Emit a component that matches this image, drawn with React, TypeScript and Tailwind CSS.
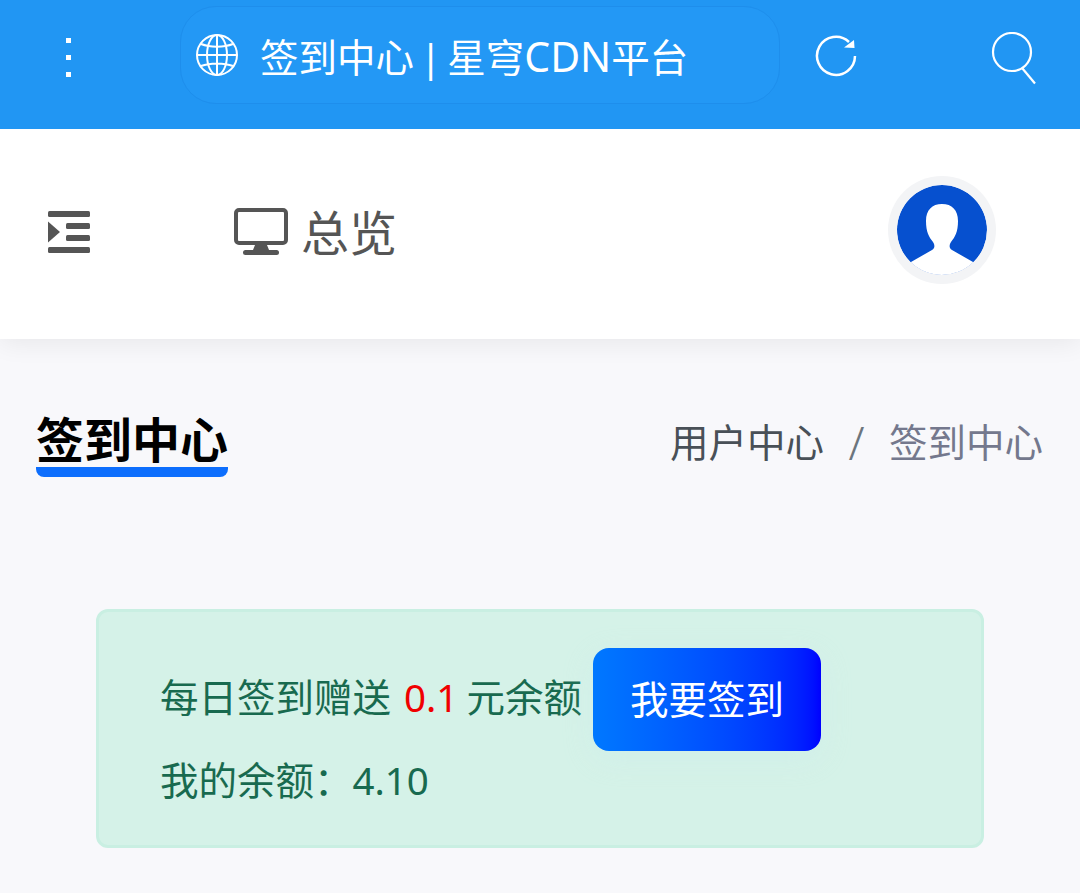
import React from "react";

const FONT = "font-['Noto_Sans','Noto_Sans_CJK_SC',sans-serif]";

const GlobeIcon = () => (
  <svg width="44" height="44" viewBox="0 0 44 44" fill="none" stroke="white" strokeWidth="2">
    <circle cx="22" cy="22" r="20" />
    <ellipse cx="22" cy="22" rx="10" ry="20" />
    <path d="M22 2v40M2 22h40M6 11c9 3.5 23 3.500 32 0M6 33c9-3.500 23-3.500 32 0" />
  </svg>
);

const ReloadIcon = () => (
  <svg width="42" height="42" viewBox="0 0 42 42" fill="none">
    <path d="M40 21a19 19 0 1 1-6-14" stroke="white" strokeWidth="2.500" />
    <path d="M29 12.500l10.500 0.500-0.500-8z" fill="white" />
  </svg>
);

const SearchIcon = () => (
  <svg width="46" height="54" viewBox="0 0 46 54" fill="none" stroke="white" strokeWidth="2.200">
    <circle cx="21" cy="20" r="19" />
    <path d="M31.500 36.500L44 51.500" />
  </svg>
);

const IndentIcon = () => (
  <svg width="42" height="42" viewBox="0 0 42 42" fill="#555555">
    <rect x="0" y="0" width="42" height="6" rx="1.500" />
    <rect x="18" y="12" width="24" height="6" rx="1.500" />
    <rect x="18" y="24" width="24" height="6" rx="1.500" />
    <rect x="0" y="36" width="42" height="6" rx="1.500" />
    <path d="M0 10.500L12 21 0 31.500z" />
  </svg>
);

const MonitorIcon = () => (
  <svg width="54" height="48" viewBox="0 0 54 48" fill="none">
    <rect x="2" y="2" width="50" height="33" rx="3" stroke="#555555" strokeWidth="4" />
    <path d="M21 37h12l2 5h-16z" fill="#555555" />
    <rect x="9" y="42" width="36" height="5" rx="2.500" fill="#555555" />
  </svg>
);

const Avatar = () => (
  <div className="w-[108px] h-[108px] rounded-full bg-[#f3f4f6] flex items-center justify-center">
    <svg width="90" height="90" viewBox="0 0 90 90" className="rounded-full">
      <circle cx="45" cy="45" r="45" fill="#0650cf" />
      <path
        d="M14 77L35 65C38 63 38 60 36 57C32 52 29 47 29 36C29 25 35 19 45 19C55 19 61 25 61 36C61 47 58 52 54 57C52 60 52 63 55 65L76 77V92H14z"
        fill="white"
      />
    </svg>
  </div>
);

export default function App() {
  return (
    <div className={`${FONT} w-full min-h-[893px] bg-[#f8f8fb] overflow-hidden`}>
      <div className="relative z-10 h-[129px] bg-[#2196f3] flex items-center">
        <div className="w-[180px] flex justify-center pr-[44px] pb-[15px]">
          <div className="flex flex-col gap-[12px]">
            <span className="block w-[5px] h-[5px] bg-white" />
            <span className="block w-[5px] h-[5px] bg-white" />
            <span className="block w-[5px] h-[5px] bg-white" />
          </div>
        </div>
        <div className="w-[600px] h-[98px] mb-[20px] rounded-[36px] border border-[#1e8eec] bg-[#2398f5] flex items-center pl-[14px] gap-[21px]">
          <GlobeIcon />
          <span className="text-[38.500px] leading-none text-white whitespace-nowrap pt-[4px] [word-spacing:-4px]">
            签到中心 | 星穹<span className="text-[41px]">CDN</span>平台
          </span>
        </div>
        <div className="ml-[35px] mb-[18px]">
          <ReloadIcon />
        </div>
        <div className="ml-auto mr-[43px] mb-[11px]">
          <SearchIcon />
        </div>
      </div>

      <div className="h-[210px] bg-white shadow-[0_4px_24px_rgba(0,0,0,0.07)] flex items-center pl-[48px] pr-[84px]">
        <div className="mb-[4px]">
          <IndentIcon />
        </div>
        <div className="ml-[144px] flex items-center gap-[13px]">
          <div className="mb-[4px]">
            <MonitorIcon />
          </div>
          <span className="text-[48px] leading-none text-[#555555] pb-[3px]">总览</span>
        </div>
        <div className="ml-auto pb-[8px]">
          <Avatar />
        </div>
      </div>

      <div className="flex items-start justify-between pl-[36px] pr-[37px] pt-[72px]">
        <div className="w-[192px] relative h-[66px]">
          <span className="block text-[48px] leading-[57px] font-bold text-black whitespace-nowrap">
            签到中心
          </span>
          <div className="absolute left-0 right-0 bottom-0 h-[10px] rounded-b-[8px] bg-[#0d6efd]" />
        </div>
        <div className="flex items-center text-[38.500px] leading-[54px] pt-[4px] whitespace-nowrap">
          <span className="text-[#495057]">用户中心</span>
          <span className="text-[46px] text-[#6c757d] mx-[24.500px] font-light">/</span>
          <span className="text-[#74788d]">签到中心</span>
        </div>
      </div>

      <div className="mx-[96px] mt-[132px] h-[239px] rounded-[12px] border-[3px] border-[#c9efe2] bg-[#d5f2e8] pl-[61px] pt-[36px] text-[#186a4f]">
        <div className="flex items-center h-[103px] text-[38.500px] leading-none whitespace-nowrap">
          <span className="pb-[4px]">
            每日签到赠送 <span className="text-[#f00000] pl-[3px] mr-[-2px]">0.1</span> 元余额
          </span>
          <button className="ml-[11px] w-[228px] h-[103px] rounded-[16px] bg-gradient-to-r from-[#0078ff] to-[#0000ff] text-white shadow-[0_8px_30px_rgba(200,235,240,0.3)]">
            我要签到
          </button>
        </div>
        <div className="mt-[2px] text-[38.500px] leading-[54px] whitespace-nowrap">我的余额：4.10</div>
      </div>
    </div>
  );
}
